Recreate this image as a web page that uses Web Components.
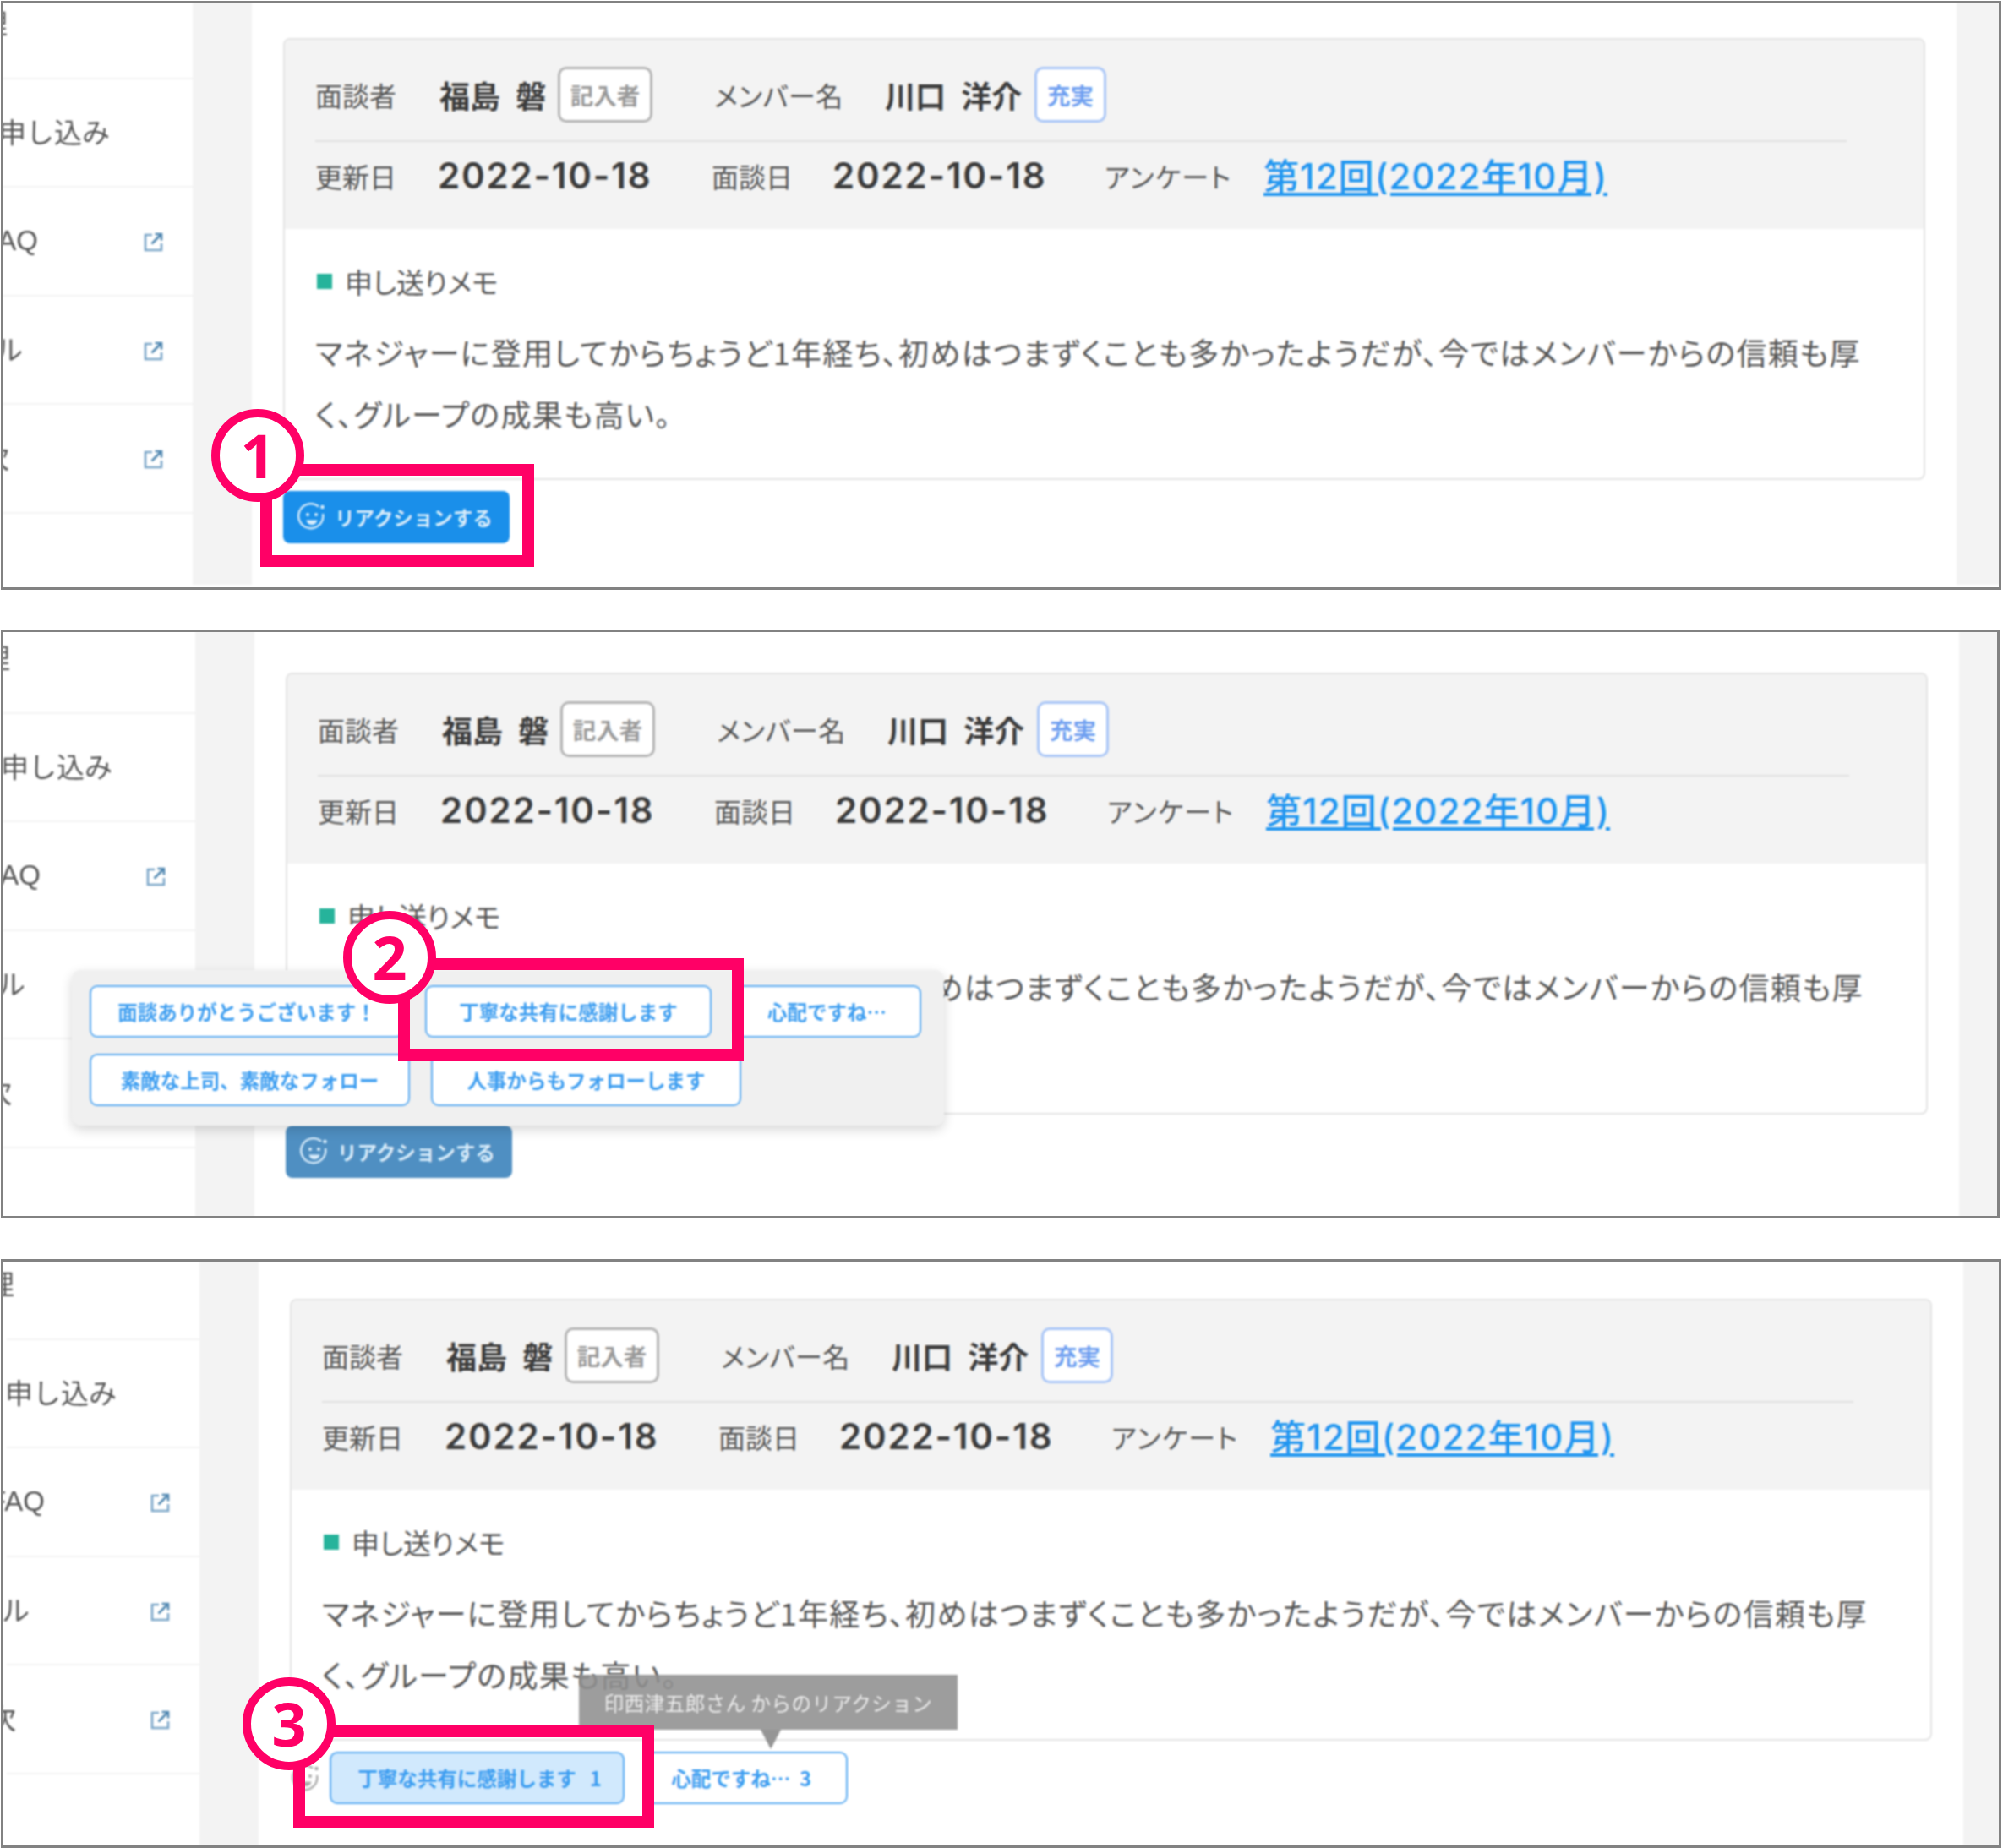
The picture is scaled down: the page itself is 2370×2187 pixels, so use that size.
<!DOCTYPE html>
<html lang="ja"><head><meta charset="utf-8"><title>リアクション</title>
<style>
html,body{margin:0;padding:0;background:#fff}
body{width:2370px;height:2187px;overflow:hidden;font-family:"Noto Sans CJK JP","Noto Sans",sans-serif;font-feature-settings:"palt";color:#555;display:flex;flex-direction:column;align-items:flex-start;padding:1px 0 0 1px;box-sizing:border-box}
review-panel{width:2367px}
review-panel#p2{margin-top:47px}
review-panel#p3{margin-top:48px}
</style></head><body>
<script>
const reg=(name,html)=>customElements.define(name,class extends HTMLElement{
  connectedCallback(){
    if(this.shadowRoot)return;
    const r=this.attachShadow({mode:'open'});
    r.innerHTML=typeof html==='function'?html(this):html;
  }
});

reg('smile-icon',`<style>:host{display:inline-block;width:34px;height:34px;color:inherit;flex:none}svg{display:block;width:100%;height:100%}</style>
<svg viewBox="0 0 34 34" fill="none" stroke="currentColor" stroke-width="2.4"><path d="M25 4.5A14.5 14.5 0 1 0 30 13"/><circle cx="12" cy="14" r="2" fill="currentColor" stroke="none"/><circle cx="22" cy="14" r="2" fill="currentColor" stroke="none"/><path d="M10.5 20.5h13c-.8 4-3.4 5.5-6.500 5.500s-5.700-1.500-6.500-5.500z" fill="currentColor" stroke="none"/><circle cx="29.500" cy="5" r="2.300" fill="currentColor" stroke="none"/></svg>`);

reg('ext-icon',`<style>:host{display:inline-block;width:23px;height:23px;flex:none}svg{display:block;width:100%;height:100%}</style>
<svg viewBox="0 0 23 23" fill="none" stroke="#7ba6c8" stroke-width="2.600"><path d="M10 3H2v18h19v-8"/><path d="M9.500 13.500L20 3" stroke="#4f86b0"/><path d="M13.500 2H21v7.500" stroke="#4f86b0"/></svg>`);

reg('side-item',el=>`<style>
:host{display:block;height:128.500px;box-sizing:border-box;border-bottom:2px solid #f3f3f3;position:relative;font:33px "Liberation Sans","Noto Sans CJK JP",sans-serif;font-feature-settings:normal;color:#555}
:host([latin]) .t{padding-bottom:1px}
.t{width:${el.getAttribute('end')}px;height:100%;box-sizing:border-box;padding-bottom:4px;display:flex;align-items:center;justify-content:flex-end;white-space:nowrap}
.i{position:absolute;left:170px;top:53px;display:flex}
</style><div class="t"><slot></slot></div><div class="i"><slot name="icon"></slot></div>`);

reg('meta-pill',`<style>
:host{display:inline-flex;align-items:center;justify-content:center;box-sizing:border-box;height:66px;background:#fff;border:3px solid #b4b4b4;border-radius:10px;font-size:27.500px;font-weight:700;color:#9a9a9a;white-space:nowrap}
:host([tone=blue]){border-color:#a9c6f7;color:#6f9ff0}
</style><slot></slot>`);

reg('react-button',`<style>
:host{display:inline-flex;align-items:center;box-sizing:border-box;width:268px;height:62px;background:var(--btn,#1a8fea);border-radius:8px;color:#d8ecfb;font-size:23.500px;font-weight:700;font-feature-settings:normal;padding-left:17px;gap:10px;white-space:nowrap}
</style><smile-icon></smile-icon><slot></slot>`);

reg('reaction-chip',el=>`<style>
:host{display:inline-flex;align-items:center;justify-content:center;box-sizing:border-box;width:${el.getAttribute('w')}px;height:62px;background:#fff;border:2.500px solid #5cacf2;border-radius:9px;color:#3c9df0;font-size:23.500px;font-weight:700;font-feature-settings:normal;white-space:pre}
:host([on]){background:#d1e9fd;padding-left:6px}
:host([lean]){padding-right:13px}
</style><slot></slot>`);

reg('pop-menu',`<style>
:host{position:absolute;box-sizing:border-box;background:#f0f0f0;border-radius:10px;box-shadow:0 5px 14px rgba(0,0,0,.16);padding:18px 0 0 21px;display:block;filter:blur(.9px)}
.g{display:flex;flex-wrap:wrap;gap:19px 25px}
</style><div class="g"><slot></slot></div>`);

reg('tip-box',`<style>
:host{position:absolute;box-sizing:border-box;background:rgba(143,143,143,.88);color:#eee;font-size:23.500px;letter-spacing:.5px;font-feature-settings:normal;display:flex;align-items:center;justify-content:center;white-space:pre;filter:blur(.9px)}
.a{position:absolute;left:215px;top:100%;width:0;height:0;border-left:12px solid transparent;border-right:12px solid transparent;border-top:23px solid rgba(143,143,143,.95)}
</style><slot></slot><div class="a"></div>`);

reg('note-mark',el=>`<style>
:host{position:absolute;left:0;top:0;display:block;pointer-events:none}
.b{position:absolute;box-sizing:border-box;border:14px solid #ff0066}
.c{position:absolute;box-sizing:border-box;width:110px;height:110px;border:10px solid #ff0066;border-radius:50%;background:#fff;color:#ff0066;font:700 72px/88px "Noto Sans",sans-serif;text-align:center}
</style><div class="b" style="left:${el.getAttribute('bx')}px;top:${el.getAttribute('by')}px;width:${el.getAttribute('bw')}px;height:${el.getAttribute('bh')}px"></div>
<div class="c" style="left:${el.getAttribute('cx')-55}px;top:${el.getAttribute('cy')-55}px"><slot></slot></div>`);

reg('review-panel',`<style>
:host{display:block;position:relative;box-sizing:border-box;height:697px;border:3px solid #828282;overflow:hidden;background:#fff}
.stage{display:flex;width:2500px;height:727px;filter:blur(.9px);margin-left:var(--mx);margin-top:var(--my);position:relative}
.side{width:228px;flex:none}
.gut{width:70px;flex:none;background:#f3f3f3}
.main{width:2017px;flex:none;box-sizing:border-box;padding:80px 37px 0;background:#fff}
.band{flex:1;background:#f3f3f3}
.act{display:flex;gap:25px;margin-top:13px;position:relative}
</style>
<div class="stage">
 <div class="side"><slot name="side"></slot></div>
 <div class="gut"></div>
 <div class="main"><review-card></review-card><div class="act"><slot name="act"></slot></div></div>
 <div class="band"></div>
</div><slot></slot>`);

reg('review-card',`<style>
:host{display:block;box-sizing:border-box;width:1943px;height:523px;border:2px solid #e3e3e3;border-radius:8px;overflow:hidden;background:#fff}
.head{background:#f3f3f3;height:224px;box-sizing:border-box;padding:32px 91px 0 36px}
.r{display:flex;align-items:center;white-space:nowrap}
.r1{height:89px;border-bottom:2px solid #e0e0e0;padding-bottom:21px;box-sizing:border-box}
.r2{height:87px;margin-top:-4px}
.l{font-size:32px;color:#555;flex:none}
.n{font-size:36px;font-weight:700;color:#3c3c3c;flex:none;word-spacing:10px}
.d{font:600 42px "Inter",sans-serif;letter-spacing:1.800px;color:#3c3c3c;flex:none}
a{font:500 42px "Inter","Noto Sans CJK JP",sans-serif;letter-spacing:1.100px;color:#2196f0;text-decoration:underline;text-underline-offset:4px;margin-top:-5px}
.body{padding:42px 36px 0;}
.m{display:flex;align-items:center;height:40px;font-size:33px;color:#555;margin-left:2px}
.m i{display:block;width:18px;height:18px;background:#26b39b;margin-right:15px}
p{margin:27px 0 0;font-size:36px;letter-spacing:1.330px;line-height:73px;color:#555;white-space:nowrap}
</style>
<div class="head">
 <div class="r r1"><span class="l" style="width:147px">面談者</span><span class="n" style="width:140px">福島 磐</span><meta-pill style="width:112px">記入者</meta-pill><span class="l" style="width:202px;margin-left:73px;letter-spacing:.5px">メンバー名</span><span class="n" style="width:177px">川口 洋介</span><meta-pill tone="blue" style="width:85px">充実</meta-pill></div>
 <div class="r r2"><span class="l" style="width:145px">更新日</span><span class="d" style="width:324px">2022-10-18</span><span class="l" style="width:143px">面談日</span><span class="d" style="width:322px">2022-10-18</span><span class="l" style="width:188px;letter-spacing:1.500px">アンケート</span><a href="#">第12回(2022年10月)</a></div>
</div>
<div class="body"><div class="m"><i></i>申し送りメモ</div><p>マネジャーに登用してからちょうど1年経ち、初めはつまずくことも多かったようだが、今ではメンバーからの信頼も厚<br>く、グループの成果も高い。</p></div>`);
</script>

<review-panel id="p1" style="--mx:-4px;--my:-39px">
 <side-item slot="side" end="9">管理</side-item>
 <side-item slot="side" end="130">申し込み</side-item>
 <side-item slot="side" end="45" latin>FAQ<ext-icon slot="icon"></ext-icon></side-item>
 <side-item slot="side" end="27">マニュアル<ext-icon slot="icon"></ext-icon></side-item>
 <side-item slot="side" end="11">目次<ext-icon slot="icon"></ext-icon></side-item>
 <react-button slot="act">リアクションする</react-button>
 <note-mark bx="304" by="545" bw="324" bh="122" cx="301" cy="535">1</note-mark>
</review-panel>

<review-panel id="p2" style="--mx:-1px;--my:-32px;width:2365px">
 <side-item slot="side" end="9">管理</side-item>
 <side-item slot="side" end="130">申し込み</side-item>
 <side-item slot="side" end="45" latin>FAQ<ext-icon slot="icon"></ext-icon></side-item>
 <side-item slot="side" end="27">マニュアル<ext-icon slot="icon"></ext-icon></side-item>
 <side-item slot="side" end="11">目次<ext-icon slot="icon"></ext-icon></side-item>
 <react-button slot="act" style="--btn:#4f8fc2">リアクションする</react-button>
 <pop-menu style="left:81px;top:400px;width:1032px;height:184px">
  <reaction-chip w="372">面談ありがとうございます！</reaction-chip>
  <reaction-chip w="339">丁寧な共有に感謝します</reaction-chip>
  <reaction-chip w="223">心配ですね…</reaction-chip>
  <reaction-chip w="379">素敵な上司、素敵なフォロー</reaction-chip>
  <reaction-chip w="367">人事からもフォローします</reaction-chip>
 </pop-menu>
 <note-mark bx="467" by="386" bw="409" bh="122" cx="457" cy="385">2</note-mark>
</review-panel>

<review-panel id="p3" style="--mx:4px;--my:-36px">
 <side-item slot="side" end="9">管理</side-item>
 <side-item slot="side" end="130">申し込み</side-item>
 <side-item slot="side" end="45" latin>FAQ<ext-icon slot="icon"></ext-icon></side-item>
 <side-item slot="side" end="27">マニュアル<ext-icon slot="icon"></ext-icon></side-item>
 <side-item slot="side" end="11">目次<ext-icon slot="icon"></ext-icon></side-item>
 <smile-icon slot="act" style="position:absolute;left:2px;top:15px;color:#aaa"></smile-icon>
 <reaction-chip slot="act" w="349" on style="margin-left:47px">丁寧な共有に感謝します   1</reaction-chip>
 <reaction-chip slot="act" w="239" lean>心配ですね…  3</reaction-chip>
 <tip-box style="left:681px;top:489px;width:448px;height:65px">印西津五郎さん からのリアクション</tip-box>
 <note-mark bx="343" by="549" bw="427" bh="121" cx="338" cy="547">3</note-mark>
</review-panel>
</body></html>
